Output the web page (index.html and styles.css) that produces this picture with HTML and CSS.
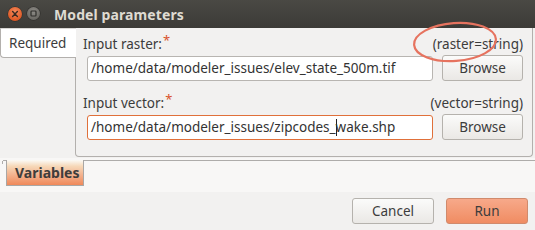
FILE: index.html
```html
<!DOCTYPE html>
<html>
<head>
<meta charset="utf-8">
<link rel="stylesheet" href="styles.css">
</head>
<body>
<div class="window">
  <div class="titlebar">
    <span class="wbtn close"><svg width="14" height="14" viewBox="0 0 14 14"><path d="M4.6 4.6 L9.4 9.4 M9.4 4.6 L4.6 9.4" stroke="#3a2a22" stroke-width="1.4" stroke-linecap="round"/></svg></span>
    <span class="wbtn mini"><svg width="13" height="13" viewBox="0 0 13 13"><rect x="4" y="4" width="5" height="5" rx="0.8" fill="none" stroke="#2e2d2a" stroke-width="1.2"/></svg></span>
    <span class="title">Model parameters</span>
  </div>
  <div class="main">
    <div class="vtab">Required</div>
    <div class="panel">
      <div class="labelrow">
        <span class="label">Input raster:<sup class="req">*</sup></span>
        <span class="type">(raster=string)</span>
      </div>
      <div class="fieldrow">
        <div class="field">/home/data/modeler_issues/elev_state_500m.tif</div>
        <div class="btn browse">Browse</div>
      </div>
      <div class="labelrow second">
        <span class="label">Input vector:<sup class="req">*</sup></span>
        <span class="type">(vector=string)</span>
      </div>
      <div class="fieldrow">
        <div class="field focus">/home/data/modeler_issues/zipcodes_<span class="caret"></span>wake.shp</div>
        <div class="btn browse">Browse</div>
      </div>
    </div>
  </div>
  <div class="toolbox">
    <div class="tabline">
      <div class="htab">Variables</div>
    </div>
  </div>
  <div class="actions">
    <div class="btn action">Cancel</div>
    <div class="btn action run">Run</div>
  </div>
  <svg class="mark" width="100" height="50" viewBox="0 0 100 50"><ellipse cx="50" cy="25" rx="41" ry="19" fill="none" stroke="#e6735f" stroke-width="2.2" transform="rotate(-4 50 25)"/></svg>
</div>
</body>
</html>
```
FILE: styles.css
```css
* { box-sizing: border-box; }
html, body { margin: 0; padding: 0; }
body {
  width: 535px; height: 230px; overflow: hidden;
  font-family: "Noto Sans", "DejaVu Sans", sans-serif;
  font-size: 13px; color: #3c3c3c;
  background: #f2f1f0;
}
.window { position: relative; width: 535px; height: 230px; background: #f2f1f0; }
.titlebar {
  height: 28px; display: flex; align-items: center;
  background: linear-gradient(#4a4944, #3c3b37);
  padding-left: 8px;
}
.wbtn { width: 14px; height: 14px; border-radius: 50%; display: flex; align-items: center; justify-content: center; margin-top: -1px; }
.close { background: radial-gradient(circle at 50% 35%, #f58a5c, #df5a26 70%, #b9481d); box-shadow: 0 0 0 0.5px #2c2b28; }
.mini { width: 13px; height: 13px; margin-left: 5px; background: radial-gradient(circle at 50% 35%, #8d8b86, #6c6a65 70%, #5b5955); box-shadow: 0 0 0 0.5px #2c2b28; }
.title { color: #dfdbd2; font-weight: bold; font-size: 14px; margin-left: 14px; letter-spacing: 0.1px; }
.main { display: flex; height: 129px; }
.vtab {
  width: 77px; height: 30px; background: #fff;
  border: 1px solid #b3b0ad; border-right: none; border-top-color: #d8d6d3;
  border-bottom-left-radius: 4px;
  padding: 5px 0 0 8px; color: #3c3c3c; font-size: 13.5px;
  position: relative; z-index: 1; margin-right: -1px;
}
.panel {
  flex: 1; border: 1px solid #b3b0ad; border-top: none; margin-right: 2px;
  border-bottom-left-radius: 4px; border-bottom-right-radius: 4px;
  padding: 6px 9px 0 7px;
}
.labelrow { display: flex; justify-content: space-between; align-items: baseline; height: 20px; font-size: 13.5px; }
.labelrow.second { margin-top: 12px; }
.req { color: #d9512c; font-size: 13px; vertical-align: top; position: relative; top: -4px; margin-left: 1px; }
.type { color: #3c3c3c; margin-top: 1px; }
.fieldrow { display: flex; margin-top: 2px; padding-left: 4px; gap: 9px; align-items: center; }
.field {
  width: 346px; height: 25px; background: #fff; border: 1px solid #b8b5b1; border-radius: 3px;
  padding: 2px 0 0 3px; color: #333; font-size: 13.5px; white-space: nowrap; overflow: hidden;
}
.field.focus { border-color: #e0703a; }
.caret { display: inline-block; width: 1px; height: 17px; background: #222; vertical-align: -4px; margin-right: -1px; }
.btn {
  display: flex; align-items: center; justify-content: center;
  border: 1px solid #b5b2ad; border-radius: 3px;
  background: linear-gradient(#fbfbfa, #eae8e5);
  color: #3c3c3c; font-size: 13.5px;
}
.browse { width: 81px; height: 26px; margin-top: -1px; }
.toolbox { height: 34px; margin-top: 1px; background: #f8f7f6; padding-top: 2px; }
.tabline { border-top: 1px solid #aeacaa; margin-left: 3px; height: 28px; padding-left: 3px; position: relative; }
.tabline::before { content: ""; position: absolute; left: -1px; top: 0; width: 1px; height: 3px; background: #aeacaa; }
.htab {
  width: 78px; height: 26px; margin-top: -1px;
  border: 1px solid #a9a7a5; border-top: none;
  background: linear-gradient(#fbfaf6 0%, #f6d8b8 25%, #f4b794 55%, #f0895a 100%);
  font-weight: bold; font-size: 14px; color: #3f3d3b;
  padding: 3px 0 0 8px;
}
.actions { display: flex; justify-content: flex-end; gap: 12px; padding: 6px 7px 0 0; }
.action { width: 82px; height: 26px; }
.run { background: linear-gradient(#f7a98a, #f08c62); border-color: #d08a6c; width: 82px; }
.mark { position: absolute; left: 405px; top: 17px; }
```
